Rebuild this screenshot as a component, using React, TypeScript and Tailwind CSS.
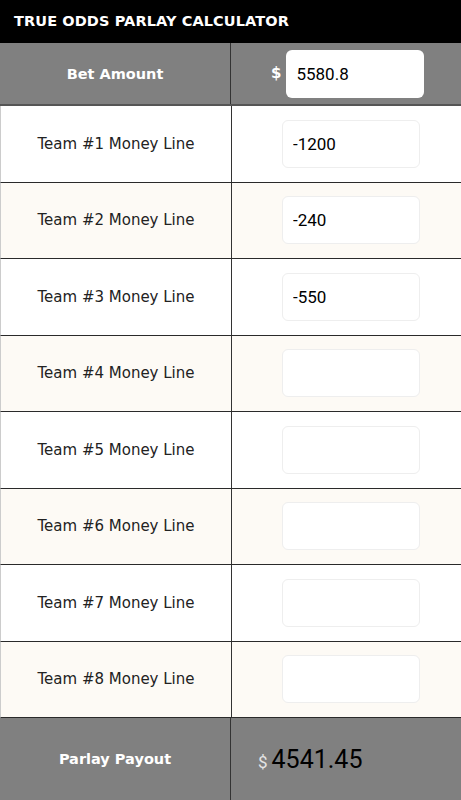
import { useState } from 'react';

const teams = ['-1200', '-240', '-550', '', '', '', '', ''];

export default function App() {
    const [bet, setBet] = useState('5580.8');
    const [lines, setLines] = useState(teams);

    return (
        <div className="flex h-[800px] w-[461px] flex-col overflow-hidden bg-white font-['DejaVu_Sans',sans-serif]">
            <div className="flex h-[43px] items-center bg-black px-[14px]">
                <h1 className="text-[14.5px] font-bold uppercase tracking-[0.1px] text-white">True Odds Parlay Calculator</h1>
            </div>

            <div className="grid h-[63px] grid-cols-[231px_1fr] border-b-2 border-[#555] bg-[#808080]">
                <div className="flex items-center justify-center border-r-[1.5px] border-[#333] pt-[2px] text-[14.5px] font-bold text-white">
                    Bet Amount
                </div>
                <div className="flex items-center pl-[40px]">
                    <span className="mr-[5px] text-[15px] font-bold text-white">$</span>
                    <input
                        value={bet}
                        onChange={(e) => setBet(e.target.value)}
                        className="h-[48px] w-[138px] rounded-[6px] bg-white px-[10px] font-['Roboto',sans-serif] text-[17px] text-black outline-none"
                    />
                </div>
            </div>

            {lines.map((v, i) => (
                <div
                    key={i}
                    className={`grid h-[76.5px] grid-cols-[231px_1fr] border-b-[1.5px] border-l border-b-[#2a2a2a] border-l-[#ccc] ${i % 2 === 1 ? 'bg-[#fdfaf5]' : 'bg-white'}`}
                >
                    <div className="flex items-center justify-center border-r-[1.5px] border-[#333] text-[15px] text-[#222]">
                        Team #{i + 1} Money Line
                    </div>
                    <div className="flex items-center pl-[50px]">
                        <input
                            value={v}
                            onChange={(e) => {
                                const next = [...lines];
                                next[i] = e.target.value;
                                setLines(next);
                            }}
                            className="h-[48px] w-[138px] rounded-[6px] border border-[#eeeeee] bg-white px-[10px] font-['Roboto',sans-serif] text-[17px] text-black outline-none"
                        />
                    </div>
                </div>
            ))}

            <div className="grid flex-1 grid-cols-[231px_1fr] bg-[#808080]">
                <div className="flex items-center justify-center border-r-[1.5px] border-[#333] pt-[2px] text-[14.5px] font-bold text-white">
                    Parlay Payout
                </div>
                <div className="flex items-center pl-[27px] pt-[2px] font-['Roboto',sans-serif]">
                    <span className="mr-[4px] mt-[5px] text-[17px] text-[#e5e5e5]">$</span>
                    <span className="text-[25px] text-black">4541.45</span>
                </div>
            </div>
        </div>
    );
}
